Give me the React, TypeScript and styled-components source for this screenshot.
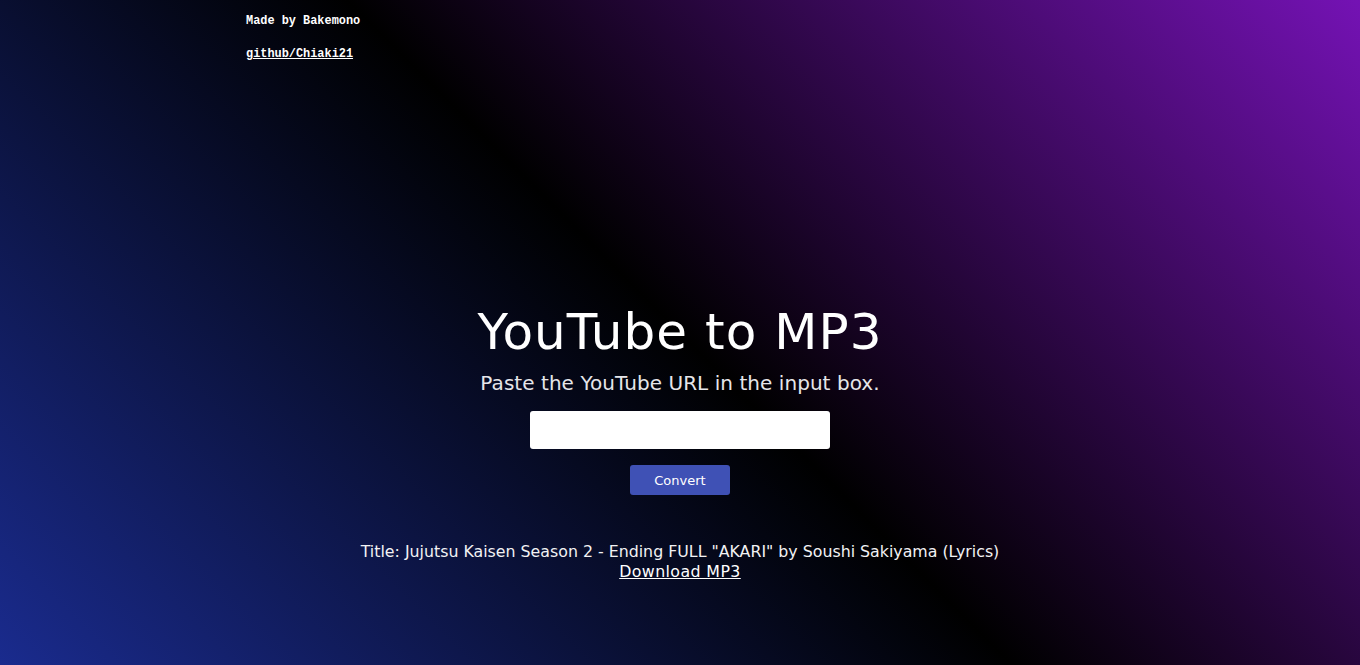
import React from "react";
import styled, { createGlobalStyle } from "styled-components";

const GlobalStyle = createGlobalStyle`
  html, body {
    margin: 0;
    padding: 0;
    height: 100%;
  }
  body {
    background: linear-gradient(45deg, #1a2b8e 0%, #000000 50%, #7412b4 100%);
    background-attachment: fixed;
    color: #ffffff;
    font-family: "DejaVu Sans", "Noto Sans", sans-serif;
  }
  #root {
    min-height: 100%;
  }
`;

const Page = styled.div`
  width: 1360px;
  height: 665px;
  display: flex;
  flex-direction: column;
  overflow: hidden;
`;

const Credits = styled.header`
  padding: 15px 0 0 246px;
  display: flex;
  flex-direction: column;
  gap: 20px;
  font-family: "Liberation Mono", "DejaVu Sans Mono", monospace;
  font-weight: 700;
  font-size: 11.9px;
  line-height: 13px;
`;

const CreditLine = styled.p`
  margin: 0;
  color: #ffffff;
`;

const CreditLink = styled.a`
  color: #ffffff;
  text-decoration: underline;
`;

const Main = styled.main`
  margin-top: 242px;
  display: flex;
  flex-direction: column;
  align-items: center;
`;

const Title = styled.h1`
  margin: 0;
  font-size: 50px;
  line-height: 58px;
  font-weight: 500;
  letter-spacing: 1.05px;
`;

const Subtitle = styled.p`
  margin: 9px 0 0;
  font-size: 20px;
  line-height: 26px;
  letter-spacing: 0.05px;
  color: #e6e6ea;
`;

const UrlInput = styled.input`
  margin-top: 15px;
  width: 300px;
  height: 38px;
  box-sizing: border-box;
  border: none;
  border-radius: 3px;
  background: #ffffff;
  padding: 0 10px;
  font-size: 15px;
  outline: none;
`;

const ConvertButton = styled.button`
  margin-top: 16px;
  width: 100px;
  height: 30px;
  border: none;
  border-radius: 3px;
  background: #3f51b5;
  color: #ffffff;
  font-family: "DejaVu Sans", "Noto Sans", sans-serif;
  font-size: 13px;
`;

const Result = styled.div`
  margin-top: 47px;
  display: flex;
  flex-direction: column;
  align-items: center;
  font-size: 15.8px;
  line-height: 20px;
  color: #f2f2f4;
`;

const DownloadLink = styled.a`
  color: #ffffff;
  text-decoration: underline;
  letter-spacing: 0.4px;
`;

export default function App() {
  return (
    <>
      <GlobalStyle />
      <Page>
        <Credits>
          <CreditLine>Made by Bakemono</CreditLine>
          <CreditLine>
            <CreditLink href="#">github/Chiaki21</CreditLink>
          </CreditLine>
        </Credits>
        <Main>
          <Title>YouTube to MP3</Title>
          <Subtitle>Paste the YouTube URL in the input box.</Subtitle>
          <UrlInput type="text" />
          <ConvertButton>Convert</ConvertButton>
          <Result>
            <span>Title: Jujutsu Kaisen Season 2 - Ending FULL "AKARI" by Soushi Sakiyama (Lyrics)</span>
            <DownloadLink href="#">Download MP3</DownloadLink>
          </Result>
        </Main>
      </Page>
    </>
  );
}
